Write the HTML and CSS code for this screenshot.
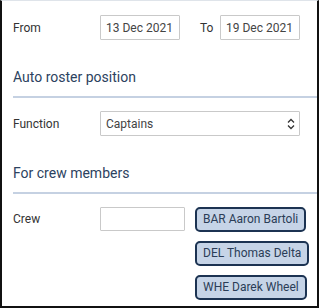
FILE: index.html
```html
<!DOCTYPE html>
<html lang="en">
<head>
    <meta charset="UTF-8">
    <title>Auto roster</title>
    <link rel="stylesheet" href="styles.css">
</head>
<body>
    <div class="panel">
        <div class="row">
            <label class="label">From</label>
            <input class="field date" type="text" value="13 Dec 2021">
            <span class="to">To</span>
            <input class="field date" type="text" value="19 Dec 2021">
        </div>

        <h2 class="section">Auto roster position</h2>
        <div class="row">
            <label class="label">Function</label>
            <div class="field select">
                <span>Captains</span>
                <svg width="10" height="12" viewBox="0 0 10 12">
                    <path d="M2 4.5 L5 1.5 L8 4.5 M2 7.5 L5 10.5 L8 7.5" fill="none" stroke="#333" stroke-width="1.3"/>
                </svg>
            </div>
        </div>

        <h2 class="section">For crew members</h2>
        <div class="row top">
            <label class="label crew-label">Crew</label>
            <input class="field crew-input" type="text">
            <div class="chips">
                <span class="chip">BAR Aaron Bartoli</span>
                <span class="chip">DEL Thomas Delta</span>
                <span class="chip">WHE Darek Wheel</span>
            </div>
        </div>
    </div>
</body>
</html>
```

FILE: styles.css
```css
html, body {
    margin: 0;
    padding: 0;
}
body {
    font-family: Roboto, "Liberation Sans", sans-serif;
    font-size: 12px;
    color: #333;
    background: #fff;
}
.panel {
    box-sizing: border-box;
    width: 319px;
    height: 308px;
    border-left: 2px solid #111;
    border-right: 2px solid #111;
    border-bottom: 2px solid #111;
    border-top: 1px solid #dfe4ea;
    padding: 14px 0 0 11px;
}
.row {
    display: flex;
    align-items: center;
}
.row.top {
    align-items: flex-start;
}
.label {
    width: 87px;
    color: #333;
}
.crew-label {
    line-height: 24px;
}
.field {
    box-sizing: border-box;
    height: 25px;
    border: 1px solid #c9c9c9;
    border-radius: 1px;
    font: inherit;
    color: #444;
    padding: 0 5px;
    background: #fff;
    outline: none;
}
.date {
    width: 80px;
}
.to {
    width: 20px;
    margin-left: 20px;
}
.section {
    margin: 28px 0 13px 0;
    padding-bottom: 10px;
    border-bottom: 2px solid #c5d1e2;
    font-size: 14px;
    font-weight: normal;
    line-height: 18px;
    color: #2c4260;
}
.select {
    width: 200px;
    display: flex;
    align-items: center;
    justify-content: space-between;
    padding: 0 3px 0 5px;
}
.crew-input {
    width: 85px;
    height: 24px;
}
.chips {
    display: flex;
    flex-direction: column;
    align-items: flex-start;
    gap: 9px;
    margin-left: 10px;
}
.chip {
    box-sizing: border-box;
    height: 25px;
    line-height: 21px;
    padding: 0 6px;
    border: 2px solid #1c3352;
    border-radius: 5px;
    background: #c6d4e7;
    color: #2b3d57;
}
```
